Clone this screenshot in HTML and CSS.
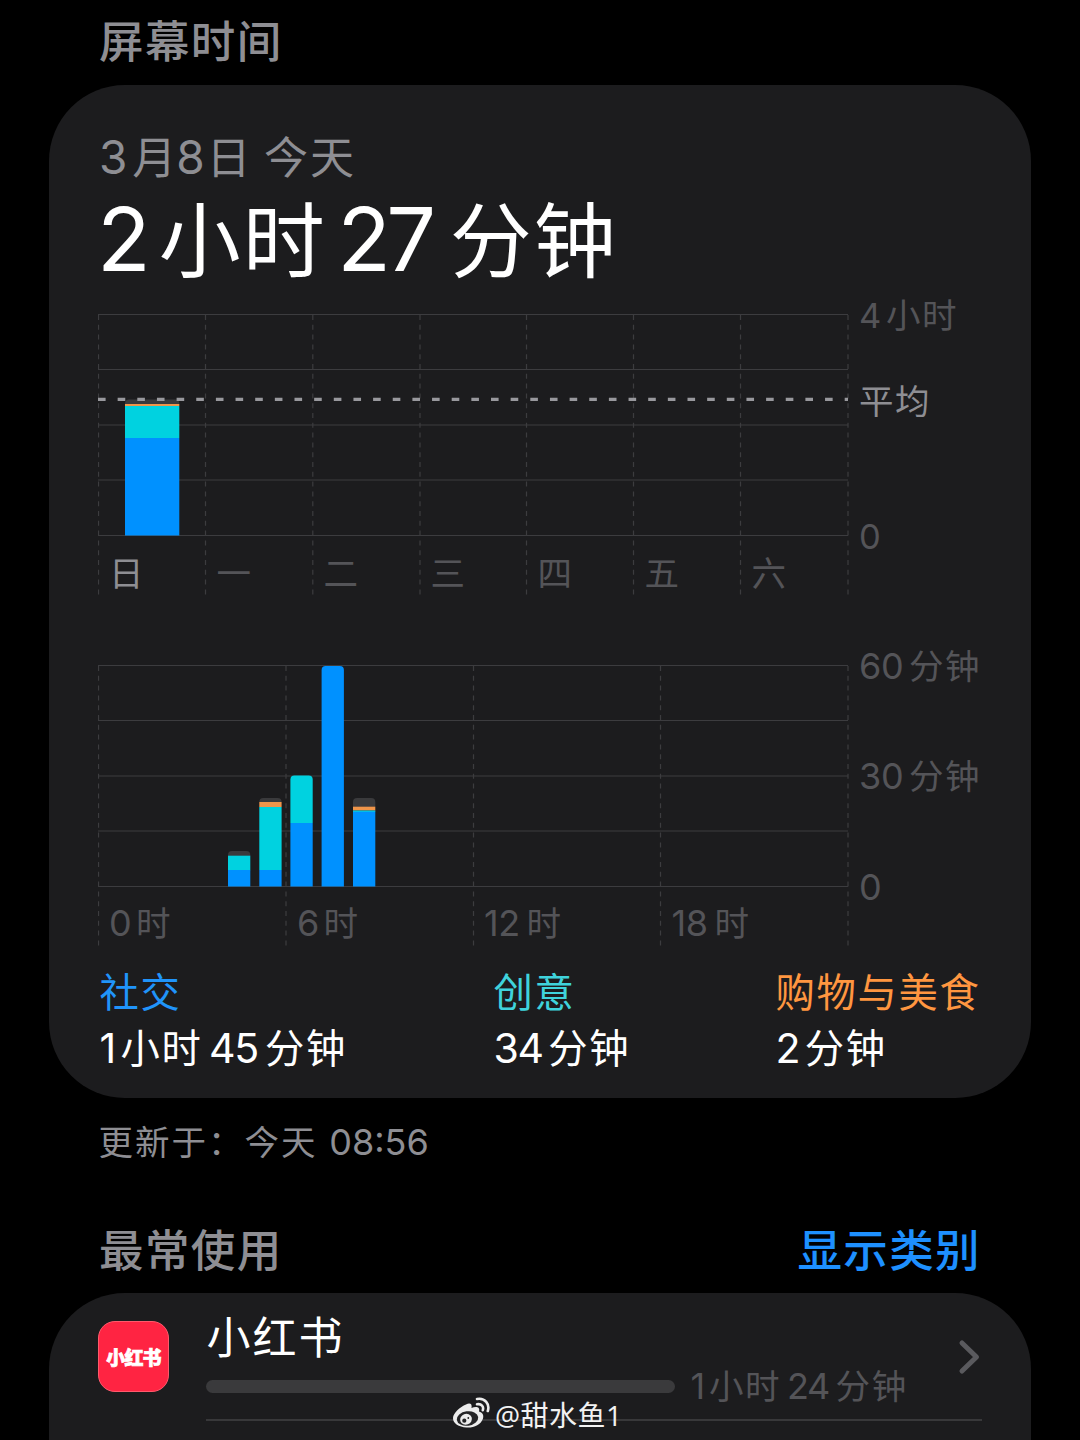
FILE: index.html
```html
<!DOCTYPE html>
<html lang="zh-CN">
<head>
<meta charset="utf-8">
<title>屏幕时间</title>
<link rel="stylesheet" href="styles.css">
</head>
<body>
<main class="screen">
  <header class="section-head first"><h2>屏幕时间</h2></header>

  <section class="card summary">
    <p class="date"><span class="num">3</span>月<span class="num mid">8</span>日 今天</p>
    <h1 class="total"><span class="num">2</span>小时<span class="num mid">27</span>分钟</h1>

    <svg class="chart week" viewBox="98 289 884 320" width="884" height="320">
      <g class="grid">
        <path d="M98 314.5H848M98 369.5H848M98 425H848M98 480H848M98 535.5H848"/>
        <path class="dashed" d="M98.5 315V595M205.5 315V595M312.8 315V595M420 315V595M526.5 315V595M633.5 315V595M740.5 315V595M848 315V595"/>
      </g>
      <path class="other" d="M125 404.5v-1a4 4 0 0 1 4-4h46.300a4 4 0 0 1 4 4v1z"/>
      <rect class="food" x="125" y="404" width="54.300" height="2"/>
      <rect class="creative" x="125" y="406" width="54.300" height="32"/>
      <rect class="social" x="125" y="438" width="54.300" height="97.500"/>
      <path class="average" d="M98 399.300H848"/>
      <g class="labels">
        <text x="859" y="327.500">4</text><text x="886" y="328">小时</text>
        <text class="strong" x="859" y="413.500">平均</text>
        <text x="859" y="548.500">0</text>
        <text class="strong" x="109" y="585.500">日</text>
        <text x="216.500" y="585.500">一</text>
        <text x="323.500" y="585.500">二</text>
        <text x="430.500" y="585.500">三</text>
        <text x="537.500" y="585.500">四</text>
        <text x="644.500" y="585.500">五</text>
        <text x="751.500" y="585.500">六</text>
      </g>
    </svg>

    <svg class="chart day" viewBox="98 609 884 350" width="884" height="350">
      <g class="grid">
        <path d="M98 665.500H848M98 720.500H848M98 776H848M98 831H848M98 886.500H848"/>
        <path class="dashed" d="M98.500 666V946M286 666V946M473.500 666V946M660.500 666V946M848 666V946"/>
      </g>
      <path class="other" d="M228 856v-1a4 4 0 0 1 4-4h14.300a4 4 0 0 1 4 4v1z"/>
      <rect class="creative" x="228" y="855.700" width="22.300" height="14.500"/>
      <rect class="social" x="228" y="870" width="22.300" height="16.500"/>
      <path class="other" d="M259.300 802v0a4 4 0 0 1 4-4h14.300a4 4 0 0 1 4 4v0z"/>
      <rect class="food" x="259.300" y="802" width="22.300" height="5"/>
      <rect class="creative" x="259.300" y="807" width="22.300" height="63"/>
      <rect class="social" x="259.300" y="870" width="22.300" height="16.500"/>
      <path class="creative" d="M290.400 823v-43.500a4 4 0 0 1 4-4h14.300a4 4 0 0 1 4 4v43.500z"/>
      <rect class="social" x="290.400" y="823" width="22.300" height="63.500"/>
      <path class="social" d="M321.600 886.500v-216.500a4 4 0 0 1 4-4h14.300a4 4 0 0 1 4 4v216.500z"/>
      <path class="other" d="M353 807v-5a4 4 0 0 1 4-4h14.300a4 4 0 0 1 4 4v5z"/>
      <rect class="food" x="353" y="806.700" width="22.300" height="3.800"/>
      <rect class="creative" x="353" y="810.500" width="22.300" height="1.500"/>
      <rect class="social" x="353" y="811.700" width="22.300" height="74.800"/>
      <g class="labels">
        <text class="n" x="859" y="679">60</text><text x="909" y="679">分钟</text>
        <text class="n" x="859" y="789">30</text><text x="909" y="789">分钟</text>
        <text class="n" x="859" y="899.500">0</text>
        <text class="n" x="109" y="936">0</text><text x="136" y="936">时</text>
        <text class="n" x="297" y="936">6</text><text x="323.500" y="936">时</text>
        <text class="n" x="484" y="936">12</text><text x="526.500" y="936">时</text>
        <text class="n" x="671.500" y="936">18</text><text x="714.500" y="936">时</text>
      </g>
    </svg>

    <dl class="legend">
      <div><dt class="c-social">社交</dt><dd><span class="num">1</span>小时<span class="num mid">45</span>分钟</dd></div>
      <div><dt class="c-creative">创意</dt><dd><span class="num">34</span>分钟</dd></div>
      <div><dt class="c-food">购物与美食</dt><dd><span class="num">2</span>分钟</dd></div>
    </dl>
  </section>

  <p class="updated">更新于：今天 <span class="clock">08:56</span></p>

  <header class="section-head"><h2>最常使用</h2><a class="link">显示类别</a></header>

  <section class="card apps">
    <div class="app-icon"><span>小红书</span></div>
    <div class="app-body">
      <div class="app-name">小红书</div>
      <div class="usage"><div class="track"></div><span class="time"><span class="num">1</span>小时<span class="num mid">24</span>分钟</span></div>
    </div>
    <svg class="chevron" viewBox="0 0 24 36" width="24" height="36"><path d="M4 4L18.500 18L4 32"/></svg>
  </section>
</main>

<div class="watermark">
  <svg viewBox="0 0 38 32" width="38" height="32">
    <path class="wb" d="M14 7.500C17.500 5.500 20.500 6.500 19.500 11C23.500 9.300 28.500 9.500 27 14.500C30.500 15.600 32 18 31 21.500C29 28 21.500 31 14.500 30.500C7 30 .8 26.500 1 21C1.200 16 8 10 14 7.500Z"/>
    <ellipse class="hole" cx="15.500" cy="21.500" rx="10.800" ry="7.200" transform="rotate(-8 15.500 21.500)"/>
    <ellipse class="wb" cx="14" cy="22.300" rx="6" ry="5.400" transform="rotate(-20 14 22.300)"/>
    <circle class="hole" cx="12.300" cy="23.700" r="2.100"/><circle class="hole" cx="16.300" cy="21" r=".9"/>
    <path class="wave" d="M25 7.300C29.500 6.500 32 9.500 30.800 13.200M25 2C33 .5 38 7 35.800 14"/>
  </svg>
  <span>@甜水鱼1</span>
</div>
</body>
</html>
```
FILE: styles.css
```css
* { box-sizing: border-box; margin: 0; padding: 0; }

body {
  width: 1080px;
  height: 1440px;
  overflow: hidden;
  position: relative;
  background: #000;
  color: #fff;
  font-family: Inter, "Noto Sans CJK SC", sans-serif;
  font-weight: 400;
}

.screen {
  height: 1440px;
  overflow: hidden;
  padding: 0 49px;
}

.section-head {
  display: flex;
  justify-content: space-between;
  padding: 0 50px;
  height: 54px;
  line-height: 54px;
  margin: 60px 0 15.5px;
  font-size: 44.5px;
  letter-spacing: 1.4px;
  color: #8e8e93;
}
.section-head.first { margin: 15px 0 16px; }
.section-head h2, .link { font-size: inherit; font-weight: 500; }
.link { color: #1e90ff; }

.card { background: #1c1c1e; border-radius: 76px; }

.summary { height: 1013px; padding: 44px 49px 24px; }

.num {
  display: inline-block;
  font-size: 1.045em;
  letter-spacing: -0.035em;
  margin-right: 0.14em;
}
.num.mid { margin-left: 0.16em; margin-right: 0.18em; }

.date {
  padding-left: 1px;
  height: 56px;
  line-height: 56px;
  font-size: 44px;
  letter-spacing: 2px;
  word-spacing: -3px;
  color: #8e8e93;
  white-space: pre;
}
.date .num.mid { margin-left: -2px; margin-right: 3.5px; }
.total {
  margin-top: 4px;
  margin-left: -1px;
  height: 100px;
  line-height: 100px;
  font-size: 82px;
  letter-spacing: 2px;
  font-weight: 400;
  white-space: nowrap;
}
.total .num { font-size: 88px; letter-spacing: -0.055em; margin-right: 13px; }
.total .num.mid { margin-left: 10.5px; margin-right: 18.5px; }

.chart { display: block; }
.grid path { fill: none; stroke: #3c3c3f; stroke-width: 1.2; }
.grid .dashed { stroke-dasharray: 5 4.8; }
.average { stroke: #98989d; stroke-width: 3.2; stroke-dasharray: 7.6 12.05; }
.other { fill: #3a3a3c; }
.food { fill: #f0954a; }
.creative { fill: #00d2e0; }
.social { fill: #0091ff; }
.labels { font-size: 34.5px; letter-spacing: 1.5px; fill: #545458; }
.labels .strong { fill: #8e8e93; }
.labels .n { font-size: 36px; letter-spacing: -0.3px; }

.legend {
  display: grid;
  grid-template-columns: 394px 282px auto;
  padding: 7px 0 0 1.5px;
  font-size: 39.3px;
  letter-spacing: 1.7px;
  line-height: 54.5px;
  white-space: nowrap;
}
.c-social { color: #2094fa; }
.c-creative { color: #3fd3dc; }
.c-food { color: #ff9640; }

.updated {
  margin-top: 21.5px;
  padding-left: 49.5px;
  height: 44px;
  line-height: 44px;
  font-size: 34.5px;
  letter-spacing: 2px;
  color: #8e8e93;
}
.clock { font-size: 36px; letter-spacing: 0; }

.apps {
  display: flex;
  height: 300px;
  padding: 18px 49px 0;
}
.app-icon {
  width: 71px;
  height: 71px;
  margin-top: 10px;
  border-radius: 17px;
  background: #ff2442;
  border: 1px solid #ff5a6c;
  display: flex;
  align-items: center;
  justify-content: center;
}
.app-icon span {
  font-size: 19px;
  font-weight: 900;
  letter-spacing: -0.8px;
  -webkit-text-stroke: 0.7px #fff;
}
.app-body {
  width: 776px;
  height: 110px;
  margin-left: 37px;
  border-bottom: 2px solid #38383a;
}
.app-name {
  height: 54px;
  line-height: 54px;
  font-size: 44px;
  letter-spacing: 2px;
  padding-left: 0.5px;
}
.usage { display: flex; align-items: center; height: 42px; gap: 15.5px; }
.track { width: 469px; height: 13px; border-radius: 7px; background: #3a3a3c; }
.time {
  font-size: 34.5px;
  letter-spacing: 1.6px;
  line-height: 42px;
  color: #545458;
  white-space: nowrap;
}
.chevron { margin: 28px 0 0 -24.5px; }
.chevron path {
  fill: none;
  stroke: #5a5a5e;
  stroke-width: 5;
  stroke-linecap: round;
  stroke-linejoin: round;
}

.watermark {
  position: absolute;
  left: 452px;
  top: 1397px;
  display: flex;
  gap: 5px;
  font: 28px/36px "Open Sans", "Noto Sans CJK SC", sans-serif;
  letter-spacing: 0.5px;
  color: #f2f2f2;
  white-space: nowrap;
}
.wb { fill: #ececec; }
.hole { fill: #242426; }
.wave { fill: none; stroke: #ececec; stroke-width: 2.6; stroke-linecap: round; }
```
